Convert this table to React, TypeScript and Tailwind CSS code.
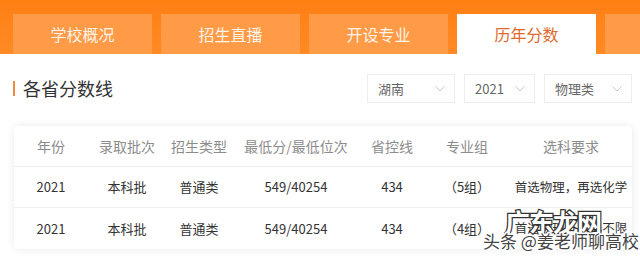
import React from "react";

const font = "font-['Microsoft_YaHei','Noto_Sans_CJK_SC','Noto_Sans',sans-serif]";

function Chevron() {
  return (
    <svg width="10" height="6" viewBox="0 0 10 6" className="shrink-0">
      <path d="M0.5 0.5 L5 5 L9.5 0.5" fill="none" stroke="#c8c8c8" strokeWidth="1" />
    </svg>
  );
}

function Select({ label, w }: { label: string; w: string }) {
  return (
    <div className={`${w} h-[29px] border border-[#ededed] flex items-center justify-between pl-[10px] pr-[9px] text-[13px] text-[#666]`}>
      <span>{label}</span>
      <Chevron />
    </div>
  );
}

const cols = "grid grid-cols-[74px_78px_66px_128px_64px_86px_1fr]";

const rows = [
  ["2021", "本科批", "普通类", "549/40254", "434", "（5组）", "首选物理，再选化学"],
  ["2021", "本科批", "普通类", "549/40254", "434", "（4组）", "首选物理，再选不限"],
];

export default function App() {
  return (
    <div className={`w-[640px] h-[259px] bg-white overflow-hidden relative ${font}`}>
      <div className="h-[54px] bg-gradient-to-b from-[#ff7f12] to-[#ff8a24] flex gap-[9px] pl-[13px] pt-[14px] overflow-hidden">
        {["学校概况", "招生直播", "开设专业", "历年分数", ""].map((t, i) => (
          <div
            key={i}
            className={`w-[139px] shrink-0 h-[40px] flex items-center justify-center text-[16px] ${
              i === 3 ? "bg-white text-[#de6a2e]" : "bg-[#ff9a47] text-[#fff4e8]"
            }`}
          >
            {t}
          </div>
        ))}
      </div>

      <div className="flex items-center mt-[20px] pl-[13px] pr-[8px] h-[29px]">
        <div className="w-[2px] h-[15px] bg-[#f08a3c]" />
        <div className="ml-[8px] text-[18px] text-[#333]">各省分数线</div>
        <div className="ml-auto flex gap-[9px]">
          <Select label="湖南" w="w-[88px]" />
          <Select label="2021" w="w-[71px]" />
          <Select label="物理类" w="w-[88px]" />
        </div>
      </div>

      <div className="mt-[23px] ml-[14px] mr-[8px] rounded-[4px] bg-white shadow-[0_0_8px_rgba(0,0,0,0.09)]">
        <div className={`${cols} h-[41px] items-center text-[14px] text-[#8c8c8c] border-b border-[#f0f0f0]`}>
          {["年份", "录取批次", "招生类型", "最低分/最低位次", "省控线", "专业组", "选科要求"].map((h) => (
            <div key={h} className="text-center">{h}</div>
          ))}
        </div>
        {rows.map((r, i) => (
          <div
            key={i}
            className={`${cols} h-[41px] items-center text-[13px] text-[#333] ${i === 0 ? "border-b border-[#f0f0f0]" : ""}`}
          >
            {r.map((c, j) => (
              <div key={j} className={`text-center whitespace-nowrap ${j === 6 ? "text-[12.5px]" : ""}`}>{c}</div>
            ))}
          </div>
        ))}
      </div>

      <div className="absolute left-[505px] top-[209px] text-[25px] leading-none text-white font-bold [-webkit-text-stroke:2.5px_#333] [paint-order:stroke_fill] tracking-[-1px]">
        广东龙网
      </div>
      <div className="absolute left-[483px] top-[232px] text-[17px] leading-none text-[#444] [-webkit-text-stroke:3px_#fff] [paint-order:stroke_fill] whitespace-nowrap">
        头条 @姜老师聊高校
      </div>
    </div>
  );
}
